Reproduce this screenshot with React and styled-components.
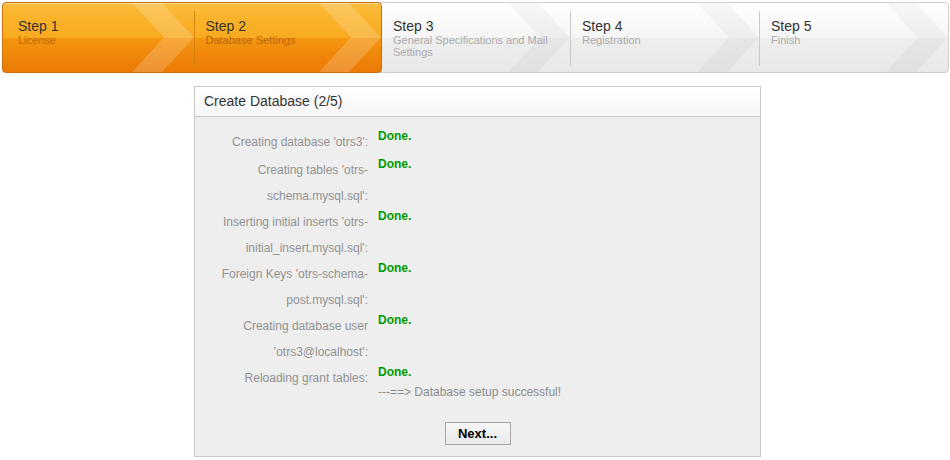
import React from "react";
import styled, { createGlobalStyle, css } from "styled-components";

const GlobalStyle = createGlobalStyle`
  body {
    margin: 0;
    background: #fff;
    font-family: "Liberation Sans", Arial, sans-serif;
  }
`;

const Page = styled.div`
  padding: 2px 1px 0 2px;
`;

const Bar = styled.div`
  display: flex;
  height: 71px;
  box-sizing: border-box;
  border: 1px solid #cfcfcf;
  border-radius: 4px;
  background: linear-gradient(to bottom, #ffffff 0%, #f5f5f5 50%, #eeeeee 51%, #e8e8e8 100%);
`;

const ActiveGroup = styled.div`
  display: flex;
  flex: 0 0 380px;
  box-sizing: border-box;
  margin: -1px 0 -1px -1px;
  border: 1px solid #c8700c;
  border-radius: 4px;
  box-shadow: inset 0 1px 0 rgba(255, 255, 255, 0.45);
  background: linear-gradient(
    to bottom,
    #fcbd3f 0%,
    #fab42c 20%,
    #f8aa20 50%,
    #f4970f 51%,
    #ef840a 80%,
    #ec7a05 100%
  );
  overflow: hidden;
`;

const Step = styled.div`
  position: relative;
  flex: 1;
  padding: 15px 12px 0 ${(p) => (p.$first ? "15px" : "11px")};
  overflow: hidden;
`;

const Chevron = styled.svg`
  position: absolute;
  top: 0;
  right: 0;
  width: 62px;
  height: 100%;
  polygon {
    fill: ${(p) => (p.$active ? "rgba(255, 255, 255, 0.18)" : "rgba(0, 0, 0, 0.03)")};
  }
`;

const StepText = styled.div`
  position: relative;
`;

const StepTitle = styled.div`
  font-size: 14px;
  line-height: 16px;
  color: #333;
`;

const StepSub = styled.div`
  font-size: 11px;
  line-height: 12px;
  color: ${(p) => (p.$active ? "#b9640a" : "#ababab")};
`;

const Divider = styled.div`
  flex: 0 0 1px;
  margin: 8px 0 6px;
  ${(p) =>
    p.$active
      ? css`
          background: #d5850f;
        `
      : css`
          background: #c9c9c9;
        `}
`;

const Panel = styled.div`
  width: 567px;
  box-sizing: border-box;
  margin: 13px 0 0 192px;
  border: 1px solid #c9c9c9;
  background: #eeeeee;
`;

const PanelHeader = styled.div`
  height: 29px;
  padding-left: 9px;
  border-bottom: 1px solid #c9c9c9;
  background: linear-gradient(to bottom, #ffffff, #f6f6f6);
  font-size: 14px;
  line-height: 29px;
  color: #333;
`;

const PanelBody = styled.div`
  padding: 12px 13px 11px;
`;

const Row = styled.div`
  display: flex;
  align-items: flex-start;
  &:first-child {
    margin-bottom: 2px;
  }
`;

const Label = styled.div`
  flex: 0 0 160px;
  text-align: right;
  font-size: 12px;
  line-height: 26px;
  color: #929292;
`;

const Value = styled.div`
  padding-left: 10px;
  font-size: 12px;
  line-height: 14px;
`;

const Done = styled.div`
  font-weight: bold;
  color: #009a00;
`;

const Message = styled.div`
  margin-top: 6px;
  color: #8c8c8c;
`;

const Actions = styled.div`
  display: flex;
  justify-content: center;
  margin-top: 23px;
`;

const Button = styled.button`
  height: 23px;
  width: 66px;
  padding: 0;
  border: 1px solid #a5a5a5;
  background: linear-gradient(to bottom, #f6f6f6, #e9e9e9);
  font-family: "Liberation Sans", Arial, sans-serif;
  font-size: 13px;
  font-weight: bold;
  color: #000;
  cursor: pointer;
`;

const steps = [
  { title: "Step 1", sub: "License" },
  { title: "Step 2", sub: "Database Settings" },
  { title: "Step 3", sub: "General Specifications and Mail Settings" },
  { title: "Step 4", sub: "Registration" },
  { title: "Step 5", sub: "Finish" },
];

const results = [
  { label: "Creating database 'otrs3':" },
  { label: "Creating tables 'otrs-schema.mysql.sql':" },
  { label: "Inserting initial inserts 'otrs-initial_insert.mysql.sql':" },
  { label: "Foreign Keys 'otrs-schema-post.mysql.sql':" },
  { label: "Creating database user 'otrs3@localhost':" },
  { label: "Reloading grant tables:", message: "---==> Database setup successful!" },
];

const StepItem = ({ step, active, first }) => (
  <Step $first={first}>
    <Chevron $active={active} viewBox="0 0 62 70" preserveAspectRatio="none">
      <polygon points="0,0 30,0 62,35 30,70 0,70 32,35" />
    </Chevron>
    <StepText>
      <StepTitle>{step.title}</StepTitle>
      <StepSub $active={active}>{step.sub}</StepSub>
    </StepText>
  </Step>
);

const App = () => {
  return (
    <Page>
      <GlobalStyle />
      <Bar>
        <ActiveGroup>
          <StepItem step={steps[0]} active first />
          <Divider $active />
          <StepItem step={steps[1]} active />
        </ActiveGroup>
        <StepItem step={steps[2]} />
        <Divider />
        <StepItem step={steps[3]} />
        <Divider />
        <StepItem step={steps[4]} />
      </Bar>

      <Panel>
        <PanelHeader>Create Database (2/5)</PanelHeader>
        <PanelBody>
          {results.map((r) => (
            <Row key={r.label}>
              <Label>{r.label}</Label>
              <Value>
                <Done>Done.</Done>
                {r.message && <Message>{r.message}</Message>}
              </Value>
            </Row>
          ))}
          <Actions>
            <Button type="button">Next...</Button>
          </Actions>
        </PanelBody>
      </Panel>
    </Page>
  );
};

export default App;
